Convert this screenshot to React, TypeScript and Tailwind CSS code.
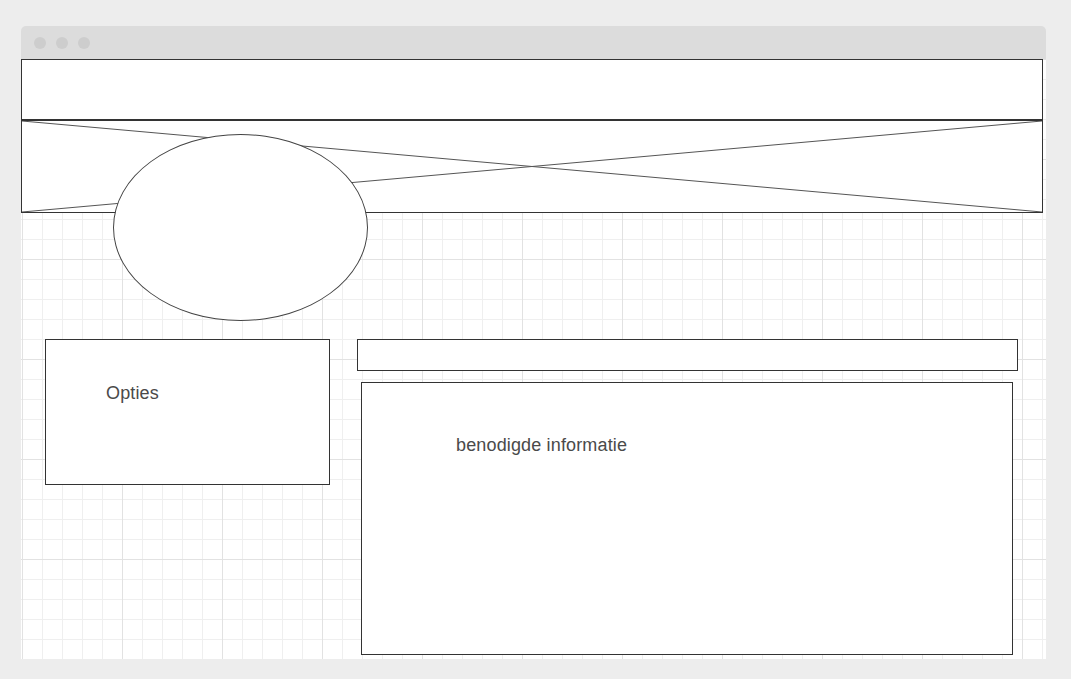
export default function App() {
  return (
    <div className="w-[1071px] h-[679px] bg-[#ededed] pl-[21px] pt-[26px] overflow-hidden font-['Liberation_Sans',Arial,sans-serif]">
      {/* Browser window */}
      <div className="w-[1025px] rounded-t-[5px] overflow-hidden">
        {/* Title bar */}
        <div className="h-[33px] bg-[#dcdcdc] flex items-center gap-[10px] pl-[13px]">
          <span className="w-3 h-3 rounded-full bg-[#cdcdcd]" />
          <span className="w-3 h-3 rounded-full bg-[#cdcdcd]" />
          <span className="w-3 h-3 rounded-full bg-[#cdcdcd]" />
        </div>

        {/* Canvas */}
        <div className="relative h-[600px] bg-white bg-[linear-gradient(to_right,#e2e2e2_1px,transparent_1px),linear-gradient(to_bottom,#e2e2e2_1px,transparent_1px),linear-gradient(to_right,#efefef_1px,transparent_1px),linear-gradient(to_bottom,#efefef_1px,transparent_1px)] bg-[size:100px_100px,100px_100px,20px_20px,20px_20px] bg-[position:1px_0,0_0,1px_0,0_0]">
          {/* Header */}
          <div className="w-[1022px] h-[61px] border border-[#333] bg-white" />

          {/* Banner placeholder */}
          <div className="relative w-[1022px] h-[93px] border border-[#333] bg-white">
            <svg className="absolute inset-0" width="1020" height="91" viewBox="0 0 1020 91" preserveAspectRatio="none">
              <line x1="0" y1="0" x2="1020" y2="91" stroke="#555" strokeWidth="1" />
              <line x1="0" y1="91" x2="1020" y2="0" stroke="#555" strokeWidth="1" />
            </svg>
          </div>

          {/* Avatar ellipse */}
          <div className="absolute left-[92px] top-[75px] w-[255px] h-[187px] rounded-[50%] border border-[#444] bg-white" />

          {/* Lower row */}
          <div className="flex items-start mt-[126px] pl-[24px]">
            <div className="w-[285px] h-[146px] border border-[#333] bg-white pl-[60px] pt-[42px]">
              <p className="text-[18px] leading-[22px] tracking-[0.15px] text-[#4a4a4a]">Opties</p>
            </div>

            <div className="ml-[27px] flex flex-col">
              <div className="w-[661px] h-[32px] border border-[#333] bg-white" />
              <div className="ml-[4px] mt-[11px] w-[652px] h-[273px] border border-[#333] bg-white pl-[94px] pt-[51px]">
                <p className="text-[18px] leading-[22px] tracking-[0.15px] text-[#4a4a4a]">benodigde informatie</p>
              </div>
            </div>
          </div>
        </div>
      </div>
    </div>
  );
}
